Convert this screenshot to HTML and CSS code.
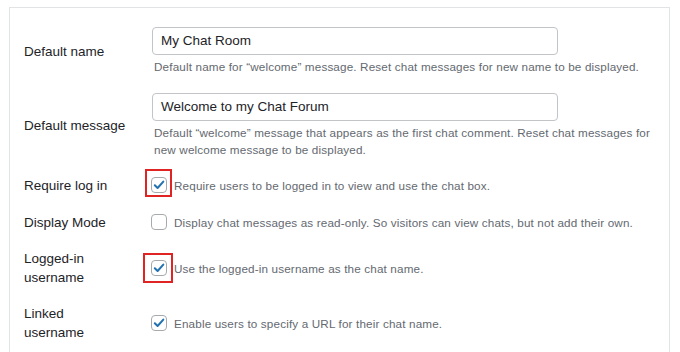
FILE: index.html
```html
<!DOCTYPE html>
<html>
<head>
<meta charset="utf-8">
<link rel="stylesheet" href="styles.css">
</head>
<body>
<div class="card">
  <div class="row row-text r1">
    <div class="label">Default name</div>
    <div class="field">
      <div class="input">My Chat Room</div>
      <p class="desc">Default name for “welcome” message. Reset chat messages for new name to be displayed.</p>
    </div>
  </div>
  <div class="row row-text r2">
    <div class="label">Default message</div>
    <div class="field">
      <div class="input">Welcome to my Chat Forum</div>
      <p class="desc">Default “welcome” message that appears as the first chat comment. Reset chat messages for new welcome message to be displayed.</p>
    </div>
  </div>
  <div class="row r3">
    <div class="label">Require log in</div>
    <div class="field check-field">
      <span class="cb checked marked"><svg viewBox="0 0 16 16"><path d="M3.8 8.2 L6.6 11 L12.3 4.6"/></svg></span>
      <span class="cdesc">Require users to be logged in to view and use the chat box.</span>
    </div>
  </div>
  <div class="row r4">
    <div class="label">Display Mode</div>
    <div class="field check-field">
      <span class="cb"></span>
      <span class="cdesc">Display chat messages as read-only. So visitors can view chats, but not add their own.</span>
    </div>
  </div>
  <div class="row r5">
    <div class="label">Logged-in<br>username</div>
    <div class="field check-field">
      <span class="cb checked marked2"><svg viewBox="0 0 16 16"><path d="M3.8 8.2 L6.6 11 L12.3 4.6"/></svg></span>
      <span class="cdesc">Use the logged-in username as the chat name.</span>
    </div>
  </div>
  <div class="row r6">
    <div class="label">Linked<br>username</div>
    <div class="field check-field">
      <span class="cb checked"><svg viewBox="0 0 16 16"><path d="M3.8 8.2 L6.6 11 L12.3 4.6"/></svg></span>
      <span class="cdesc">Enable users to specify a URL for their chat name.</span>
    </div>
  </div>
</div>
</body>
</html>
```
FILE: styles.css
```css
html, body {
  margin: 0;
  padding: 0;
  background: #fff;
  overflow: hidden;
}
body {
  font-family: "Liberation Sans", Arial, sans-serif;
  color: #1d2327;
}
.card {
  margin: 7px 10px 0 9px;
  border: 1px solid #e2e3e5;
  border-bottom: none;
  height: 345px;
  padding: 19px 0 0 14px;
  box-sizing: border-box;
}
.row {
  display: grid;
  grid-template-columns: 128px 1fr;
  align-items: center;
}
.label {
  font-size: 13.5px;
  line-height: 19px;
  color: #1d2327;
}
.input {
  width: 406px;
  height: 28px;
  box-sizing: border-box;
  border: 1px solid #c3c4c7;
  border-radius: 4px;
  padding: 0 8px;
  font-size: 13.5px;
  line-height: 26px;
  color: #1d2327;
}
.desc {
  margin: 3px 0 0 2px;
  font-size: 11.7px;
  line-height: 17px;
  color: #646970;
  letter-spacing: 0.15px;
  max-width: 510px;
}
.r2 { margin-top: 18px; }
.r3 { margin-top: 13px; height: 28px; }
.r4 { margin-top: 13px; height: 20px; }
.r5 { margin-top: 17px; height: 38px; }
.r6 { margin-top: 17px; height: 38px; }
.check-field {
  display: flex;
  align-items: center;
}
.cb {
  position: relative;
  width: 16px;
  height: 16px;
  box-sizing: border-box;
  border: 1px solid #a7aaad;
  border-radius: 4px;
  background: #fff;
  margin-left: -1px;
  margin-right: 7px;
  flex: none;
}
.cb svg {
  position: absolute;
  left: -1px;
  top: -1px;
  width: 16px;
  height: 16px;
  fill: none;
  stroke: #2271b1;
  stroke-width: 2;
  stroke-linecap: round;
  stroke-linejoin: round;
}
.marked::after {
  content: "";
  position: absolute;
  left: -7px;
  top: -9px;
  width: 27px;
  height: 28px;
  box-sizing: border-box;
  border: 2px solid #e02424;
}
.marked2::after {
  content: "";
  position: absolute;
  left: -9px;
  top: -8px;
  width: 30px;
  height: 30px;
  box-sizing: border-box;
  border: 2px solid #e02424;
}
.cdesc {
  font-size: 11.7px;
  color: #646970;
  letter-spacing: 0.15px;
}
```
